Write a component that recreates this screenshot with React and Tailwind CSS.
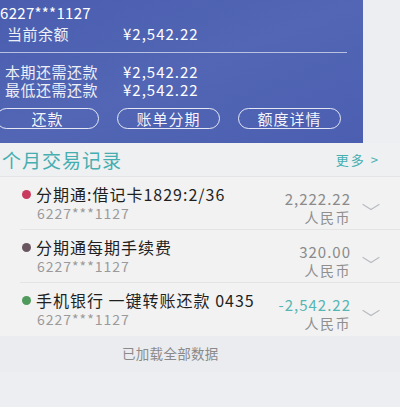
import React from 'react';

const rows = [
  { title: '分期通:借记卡1829:2/36', card: '6227***1127', amount: '2,222.22', dot: 'bg-[#c93a5e]', amountCls: 'text-[#8a8a8a]' },
  { title: '分期通每期手续费', card: '6227***1127', amount: '320.00', dot: 'bg-[#6a5660]', amountCls: 'text-[#8a8a8a]' },
  { title: '手机银行 一键转账还款 0435', card: '6227***1127', amount: '-2,542.22', dot: 'bg-[#4f9a5c]', amountCls: 'text-[#55b6b4]' },
];

const Chevron = () => (
  <svg width="18" height="8" viewBox="0 0 18 8" fill="none">
    <path d="M1 1.5 L9 6.5 L17 1.5" stroke="#b8bcc2" strokeWidth="1.2" strokeLinecap="round" />
  </svg>
);

export default function App() {
  return (
    <div className="w-[400px] h-[407px] overflow-hidden bg-[#eceef1] font-['Noto_Sans_CJK_SC','Noto_Sans',sans-serif]">
      {/* card */}
      <div className="w-[363px] h-[143px] bg-gradient-to-br from-[#4a5daf] via-[#5266b5] to-[#4b5eb0] text-white">
        <div className="h-[25px] flex items-center text-[15px] leading-none tracking-[0.3px]">6227***1127</div>
        <div className="h-[16px] flex items-center text-[15px] leading-none">
          <span className="pl-[7px] w-[123px] tracking-[0.5px] text-white/90">当前余额</span>
          <span className="tracking-[1px]">¥2,542.22</span>
        </div>
        <div className="mt-[11px] h-px w-[347px] bg-white/60" />
        <div className="mt-[9px] h-[18px] flex items-center text-[15px] leading-none">
          <span className="pl-[5px] w-[123px] tracking-[0.5px] text-white/90">本期还需还款</span>
          <span className="tracking-[1px]">¥2,542.22</span>
        </div>
        <div className="h-[18px] flex items-center text-[15px] leading-none">
          <span className="pl-[5px] w-[123px] tracking-[0.5px] text-white/90">最低还需还款</span>
          <span className="tracking-[1px]">¥2,542.22</span>
        </div>
        <div className="mt-[10px] ml-[-4px] flex gap-[18px]">
          {['还款', '账单分期', '额度详情'].map((t) => (
            <div key={t} className="w-[103px] h-[21px] rounded-full border-[1.5px] border-white/85 flex items-center justify-center text-[15px] leading-none tracking-[1px] text-white/95">
              {t}
            </div>
          ))}
        </div>
      </div>

      {/* header */}
      <div className="h-[34px] flex items-center justify-between bg-[#eef0f2] border-b border-[#e2e4e7]">
        <span className="pl-[2px] text-[19px] leading-none tracking-[1px] text-[#45aeb0]">个月交易记录</span>
        <span className="pr-[20px] text-[13px] leading-none text-[#45aeb0] tracking-[2px]">更多 &gt;</span>
      </div>

      {/* rows */}
      <div className="bg-[#f2f2f2]">
        {rows.map((r, i) => (
          <div key={i} className={`h-[53px] flex ml-[20px] ${i < rows.length - 1 ? 'border-b border-[#e4e4e4]' : ''}`}>
            <div className="flex-1 pt-[8px]">
              <div className="flex items-center h-[18px] text-[16px] leading-none tracking-[1px] text-[#1f1f1f] whitespace-nowrap">
                <span className={`w-[9px] h-[9px] shrink-0 rounded-full mr-[5px] ml-[2px] ${r.dot}`} />
                {r.title}
              </div>
              <div className="mt-[1px] pl-[17px] h-[18px] flex items-center text-[14px] leading-none text-[#9a9a9a] tracking-[1px]">
                {r.card}
              </div>
            </div>
            <div className="w-[90px] pt-[12px] flex flex-col items-end">
              <div className={`h-[18px] flex items-center text-[15px] leading-none tracking-[1px] ${r.amountCls}`}>{r.amount}</div>
              <div className="h-[17px] flex items-end text-[14px] leading-none tracking-[1.5px] text-[#8f8f8f]">人民币</div>
            </div>
            <div className="w-[49px] pl-[11px] pt-[26px]">
              <Chevron />
            </div>
          </div>
        ))}
      </div>

      {/* footer */}
      <div className="h-[36px] flex items-center pl-[122px] text-[13.5px] leading-none tracking-[0.3px] text-[#8a8a8a] bg-[#eaecef]">
        已加载全部数据
      </div>
    </div>
  );
}
